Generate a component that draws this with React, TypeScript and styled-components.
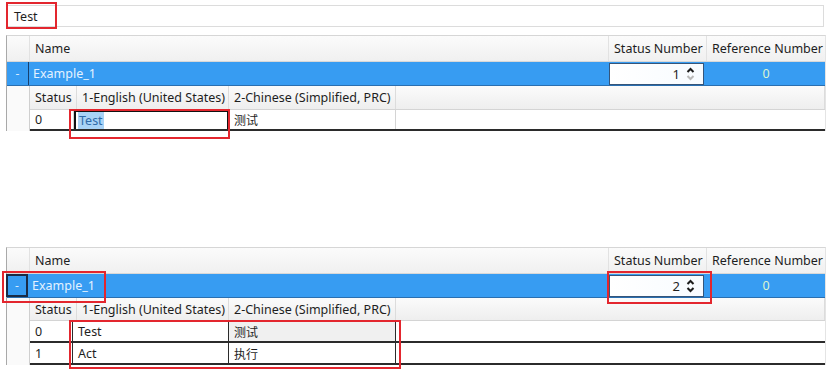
import React from "react";
import styled, { createGlobalStyle } from "styled-components";

const GlobalStyle = createGlobalStyle`
  html, body {
    margin: 0;
    padding: 0;
    background: #ffffff;
  }
  body {
    font-family: "Noto Sans", "Noto Sans CJK SC", sans-serif;
    font-size: 12px;
    color: #1e1e1e;
  }
`;

const Page = styled.div`
  position: relative;
  width: 834px;
  height: 373px;
  padding: 5px 8px 0 6px;
  box-sizing: border-box;
  overflow: hidden;
`;

const InputBar = styled.div`
  height: 22px;
  margin-left: 1px;
  margin-right: 2px;
  border: 1px solid #dcdcdc;
  box-sizing: border-box;
  display: flex;
  align-items: center;
  padding-left: 6px;
  font-size: 12.5px;
`;

const Grid = styled.div<{ $top: number }>`
  margin-top: ${({ $top }) => $top}px;
  border-left: 1px solid #a9a9a9;
  border-top: 1px solid #d6d6d6;
  border-right: 1px solid #e4e4e4;
  display: flex;
  flex-direction: column;
`;

const HeaderRow = styled.div<{ $h: number }>`
  height: ${({ $h }) => $h}px;
  display: flex;
  background: linear-gradient(#fbfbfb, #f0f0f0);
  border-bottom: 1px solid #d8d8d8;
`;

const HeadGutter = styled.div`
  width: 22px;
  border-right: 1px solid #e2e2e2;
`;

const HeadCell = styled.div<{ $w?: number }>`
  ${({ $w }) => ($w ? `width: ${$w}px;` : "flex: 1;")}
  display: flex;
  align-items: center;
  padding-left: 5px;
  box-sizing: border-box;
  border-right: 1px solid #e2e2e2;
  white-space: nowrap;
  font-size: 12.5px;
  &:last-child {
    border-right: none;
  }
`;

const MasterRow = styled.div<{ $h: number }>`
  height: ${({ $h }) => $h}px;
  display: flex;
  background: #379cf2;
  border-bottom: 1px solid #2a6fb0;
`;

const Indicator = styled.div<{ $focused?: boolean }>`
  width: 22px;
  box-sizing: border-box;
  display: flex;
  align-items: center;
  justify-content: center;
  color: #d6ebff;
  border-right: 1px solid #17406e;
  ${({ $focused }) =>
    $focused ? "border: 2px solid #1a2b45; margin-left: -1px;" : ""}
`;

const NameCell = styled.div`
  flex: 1;
  display: flex;
  align-items: center;
  padding-left: 4px;
  color: #e4f2ff;
  font-size: 12.5px;
`;

const SpinCell = styled.div`
  width: 98px;
  display: flex;
  align-items: stretch;
  padding: 1px 3px 0 0;
  box-sizing: border-box;
`;

const SpinBox = styled.div`
  flex: 1;
  display: flex;
  align-items: center;
  justify-content: flex-end;
  gap: 6px;
  padding-right: 8px;
  background: linear-gradient(90deg, #ffffff, #f7fbff);
  border: 1px solid #35557a;
  font-size: 13px;
  color: #1e1e1e;
`;

const RefCell = styled.div`
  width: 118px;
  display: flex;
  align-items: center;
  justify-content: center;
  color: #dcf5cf;
  font-size: 12.5px;
`;

const DetailArea = styled.div`
  display: flex;
`;

const DetailGutter = styled.div`
  width: 22px;
  background: #fafafa;
`;

const DetailGrid = styled.div`
  flex: 1;
  display: flex;
  flex-direction: column;
  border-left: 1px solid #cfcfcf;
`;

const DetailHeader = styled.div<{ $h: number }>`
  height: ${({ $h }) => $h}px;
  display: flex;
  background: linear-gradient(#fbfbfb, #eeeeee);
  border-bottom: 1px solid #d4d4d4;
`;

const DetailHead = styled.div<{ $w?: number }>`
  ${({ $w }) => ($w ? `width: ${$w}px;` : "flex: 1;")}
  display: flex;
  align-items: center;
  padding-left: 5px;
  box-sizing: border-box;
  border-right: 1px solid #dcdcdc;
  white-space: nowrap;
  font-size: 12.5px;
`;

const DataRow = styled.div<{ $h: number }>`
  height: ${({ $h }) => $h}px;
  display: flex;
  border-bottom: 2px solid #2b2b2b;
  box-sizing: border-box;
`;

const DataCell = styled.div<{ $w?: number; $shade?: boolean; $edge?: boolean }>`
  ${({ $w }) => ($w ? `width: ${$w}px;` : "flex: 1;")}
  display: flex;
  align-items: center;
  padding-left: 5px;
  box-sizing: border-box;
  border-right: 1px solid ${({ $edge }) => ($edge ? "#2b2b2b" : "#d4d4d4")};
  background: ${({ $shade }) => ($shade ? "#f0f0f0" : "#ffffff")};
  font-size: 12.5px;
  white-space: nowrap;
  &:last-child {
    border-right: none;
  }
`;

const EditCell = styled.div<{ $w: number }>`
  width: ${({ $w }) => $w}px;
  display: flex;
  align-items: center;
  padding-left: 2px;
  box-sizing: border-box;
  border: 2px solid #111111;
  border-bottom: none;
  font-size: 12.5px;
`;

const Selected = styled.span`
  background: #a9d3f6;
  color: #2f6aa8;
  padding: 0 1px;
`;

const Zh = styled.span`
  font-family: "Noto Sans CJK SC", sans-serif;
  font-size: 12px;
`;

const Mark = styled.div`
  position: absolute;
  border: 2px solid #e3262e;
  box-sizing: border-box;
  pointer-events: none;
`;

const Arrows = ({ downMuted }: { downMuted?: boolean }) => (
  <svg width="9" height="14" viewBox="0 0 9 14">
    <polyline
      points="1.5,5 4.5,2 7.5,5"
      fill="none"
      stroke="#1c1c1c"
      strokeWidth="2"
    />
    <polyline
      points="1.5,9 4.5,12 7.5,9"
      fill="none"
      stroke={downMuted ? "#b9b9b9" : "#1c1c1c"}
      strokeWidth="2"
    />
  </svg>
);

type Row = { status: string; en: string; zh: string };

const MasterGrid = ({
  top,
  value,
  rows,
  focusedIndicator,
  editing,
  sizes,
}: {
  top: number;
  value: number;
  rows: Row[];
  focusedIndicator?: boolean;
  editing?: boolean;
  sizes: { head: number; master: number; detailHead: number; row: number };
}) => (
  <Grid $top={top}>
    <HeaderRow $h={sizes.head}>
      <HeadGutter />
      <HeadCell>Name</HeadCell>
      <HeadCell $w={98}>Status Number</HeadCell>
      <HeadCell $w={118}>Reference Number</HeadCell>
    </HeaderRow>
    <MasterRow $h={sizes.master}>
      <Indicator $focused={focusedIndicator}>-</Indicator>
      <NameCell>Example_1</NameCell>
      <SpinCell>
        <SpinBox>
          <span>{value}</span>
          <Arrows downMuted={value === 1} />
        </SpinBox>
      </SpinCell>
      <RefCell>0</RefCell>
    </MasterRow>
    <DetailArea>
      <DetailGutter />
      <DetailGrid>
        <DetailHeader $h={sizes.detailHead}>
          <DetailHead $w={47}>Status</DetailHead>
          <DetailHead $w={152}>1-English (United States)</DetailHead>
          <DetailHead $w={167}>2-Chinese (Simplified, PRC)</DetailHead>
          <DetailHead />
        </DetailHeader>
        {rows.map((r, i) =>
          editing ? (
            <DataRow key={i} $h={sizes.row}>
              <DataCell $w={44}>{r.status}</DataCell>
              <EditCell $w={155}>
                <Selected>{r.en}</Selected>
              </EditCell>
              <DataCell $w={167}>
                <Zh>{r.zh}</Zh>
              </DataCell>
              <DataCell />
            </DataRow>
          ) : (
            <DataRow key={i} $h={sizes.row}>
              <DataCell $w={43} $edge>
                {r.status}
              </DataCell>
              <DataCell $w={156} $edge>
                {r.en}
              </DataCell>
              <DataCell $w={167} $edge $shade={i === 0}>
                <Zh>{r.zh}</Zh>
              </DataCell>
              <DataCell />
            </DataRow>
          )
        )}
      </DetailGrid>
    </DetailArea>
  </Grid>
);

export default function App() {
  return (
    <>
      <GlobalStyle />
      <Page>
        <InputBar>Test</InputBar>
        <MasterGrid
          top={8}
          value={1}
          editing
          rows={[{ status: "0", en: "Test", zh: "测试" }]}
          sizes={{ head: 25, master: 23, detailHead: 23, row: 21 }}
        />
        <MasterGrid
          top={116}
          value={2}
          focusedIndicator
          rows={[
            { status: "0", en: "Test", zh: "测试" },
            { status: "1", en: "Act", zh: "执行" },
          ]}
          sizes={{ head: 25, master: 23, detailHead: 22, row: 22 }}
        />
        <Mark style={{ left: 6, top: 2, width: 51, height: 27 }} />
        <Mark style={{ left: 69, top: 109, width: 161, height: 30 }} />
        <Mark style={{ left: 2, top: 271, width: 104, height: 32 }} />
        <Mark style={{ left: 607, top: 271, width: 105, height: 33 }} />
        <Mark style={{ left: 69, top: 320, width: 332, height: 49 }} />
      </Page>
    </>
  );
}
